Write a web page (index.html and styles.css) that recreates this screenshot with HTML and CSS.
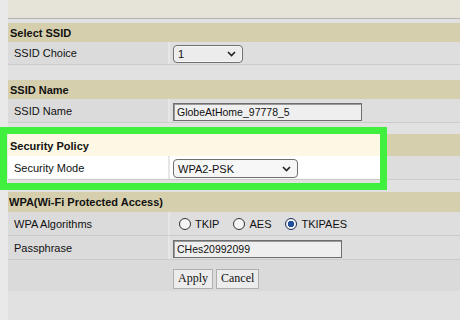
FILE: index.html
```html
<!DOCTYPE html>
<html>
<head>
<meta charset="utf-8">
<link rel="stylesheet" href="styles.css">
</head>
<body>
<div class="page">
  <div class="topbox"></div>

  <section class="group g1">
    <div class="hdr">Select SSID</div>
    <div class="row">
      <div class="lbl">SSID Choice</div>
      <div class="val">
        <div class="select sel-small"><span>1</span>
          <svg class="chev" width="9" height="6" viewBox="0 0 9 6"><path d="M1 1l3.5 3.5L8 1" stroke="#222" stroke-width="1.6" fill="none"/></svg>
        </div>
      </div>
    </div>
  </section>

  <section class="group g2">
    <div class="hdr">SSID Name</div>
    <div class="row">
      <div class="lbl">SSID Name</div>
      <div class="val"><div class="input in-name">GlobeAtHome_97778_5</div></div>
    </div>
  </section>

  <section class="group g3">
    <div class="hdr hl-hdr">Security Policy</div>
    <div class="row">
      <div class="lbl hl-lbl">Security Mode</div>
      <div class="val hl-val">
        <div class="select sel-wide"><span>WPA2-PSK</span>
          <svg class="chev" width="9" height="6" viewBox="0 0 9 6"><path d="M1 1l3.5 3.5L8 1" stroke="#222" stroke-width="1.6" fill="none"/></svg>
        </div>
      </div>
    </div>
    <div class="frame"></div>
  </section>

  <section class="group g4">
    <div class="hdr">WPA(Wi-Fi Protected Access)</div>
    <div class="row">
      <div class="lbl">WPA Algorithms</div>
      <div class="val radios">
        <span class="radio"><i class="dot"></i>TKIP</span>
        <span class="radio"><i class="dot"></i>AES</span>
        <span class="radio"><i class="dot on"></i>TKIPAES</span>
      </div>
    </div>
    <div class="row">
      <div class="lbl">Passphrase</div>
      <div class="val"><div class="input in-pass">CHes20992099</div></div>
    </div>
    <div class="row btnrow">
      <div class="lbl"></div>
      <div class="val buttons">
        <span class="btn">Apply</span>
        <span class="btn">Cancel</span>
      </div>
    </div>
  </section>
</div>
</body>
</html>
```
FILE: styles.css
```css
html, body {
  margin: 0;
  padding: 0;
}
body {
  background: #e3e3e3;
  font-family: "Liberation Sans", Arial, sans-serif;
  color: #111;
  width: 460px;
  height: 320px;
  overflow: hidden;
}
.page {
  padding-left: 8px;
  background: linear-gradient(90deg, #e9e9e9 0 8px, #e1e1e1 8px);
  height: 320px;
  box-sizing: border-box;
}
.topbox {
  height: 18px;
  background: #e6e4d8;
  border-bottom: 1px solid #b3b3b3;
}
.group {
  position: relative;
}
.g1 { margin-top: 4px; }
.g2 { margin-top: 15px; }
.g3 { margin-top: 11px; }
.g4 { margin-top: 12px; }

.hdr {
  height: 19px;
  line-height: 20px;
  padding-left: 2px;
  background: #d6cfad;
  font-weight: bold;
  font-size: 11px;
  color: #111;
}
.g3 .hdr { height: 22px; line-height: 25px; }
.g4 .hdr { height: 20px; line-height: 21px; padding-left: 1px; }

.row {
  display: grid;
  grid-template-columns: 160px 1fr;
  column-gap: 2px;
  height: 22px;
  border-bottom: 1px solid #cbcbcb;
  background: #e6e6e6;
}
.g2 .row { height: 23px; }
.g3 .row { height: 23px; }
.g4 .row { height: 23px; }
.lbl {
  background: #dbdbdb;
  font-size: 11px;
  padding-left: 6px;
  display: flex;
  align-items: center;
}
.val {
  background: #dedede;
  display: flex;
  align-items: center;
  padding-left: 3px;
}
.hl-hdr {
  background: linear-gradient(90deg, #fdf8e3 0 373px, #d6cfad 373px);
}
.hl-lbl { background: #ffffff; }
.hl-val {
  background: linear-gradient(90deg, #ffffff 0 211px, #dddddd 211px);
}
.frame {
  position: absolute;
  left: -8px;
  top: -7px;
  width: 387px;
  height: 63px;
  border: 7px solid #41f03f;
  box-sizing: border-box;
  pointer-events: none;
}

.select {
  height: 18px;
  box-sizing: border-box;
  border: 1px solid #6f6f6f;
  border-radius: 4px;
  background: #ececec;
  display: flex;
  align-items: center;
  justify-content: space-between;
  padding: 0 6px 0 4px;
  font-size: 11px;
  box-shadow: inset 0 0 0 1px #f6f6f6;
}
.sel-small { width: 70px; margin-top: 1px; }
.sel-wide { width: 125px; height: 19px; margin-top: 2px; background: #f7f7f7; }

.input {
  height: 18px;
  box-sizing: border-box;
  border: 1px solid #6e6e6e;
  box-shadow: inset 1px 1px 0 #9a9a9a;
  background: #efefef;
  font-size: 10.5px;
  padding-left: 3px;
  display: flex;
  align-items: center;
}
.in-name { width: 189px; margin-top: 2px; }
.in-pass { width: 169px; margin-top: 3px; }

.radios { gap: 0; font-size: 11px; }
.radio {
  display: inline-flex;
  align-items: center;
  margin-right: 14px;
}
.radio:first-child { margin-left: 6px; }
.dot {
  width: 10px;
  height: 10px;
  border: 1px solid #333;
  border-radius: 50%;
  background: #f4f4f4;
  margin-right: 4px;
  box-sizing: content-box;
}
.dot.on {
  border: 1.5px solid #1c2c55;
  background: radial-gradient(circle, #23509a 0 3px, #f4f4f4 3.5px);
}

.btnrow { height: 31px; border-bottom: none; background: #dadada; }
.g4 .btnrow { height: 31px; }
.btnrow .lbl, .btnrow .val { background: #dadada; }
.buttons { gap: 3px; padding-top: 6px; }
.btn {
  font-family: "Liberation Serif", "Times New Roman", serif;
  font-size: 12px;
  height: 20px;
  box-sizing: border-box;
  border: 1px solid #b0b0b0;
  background: #ececec;
  padding: 0 4px;
  display: inline-flex;
  align-items: center;
}
```
